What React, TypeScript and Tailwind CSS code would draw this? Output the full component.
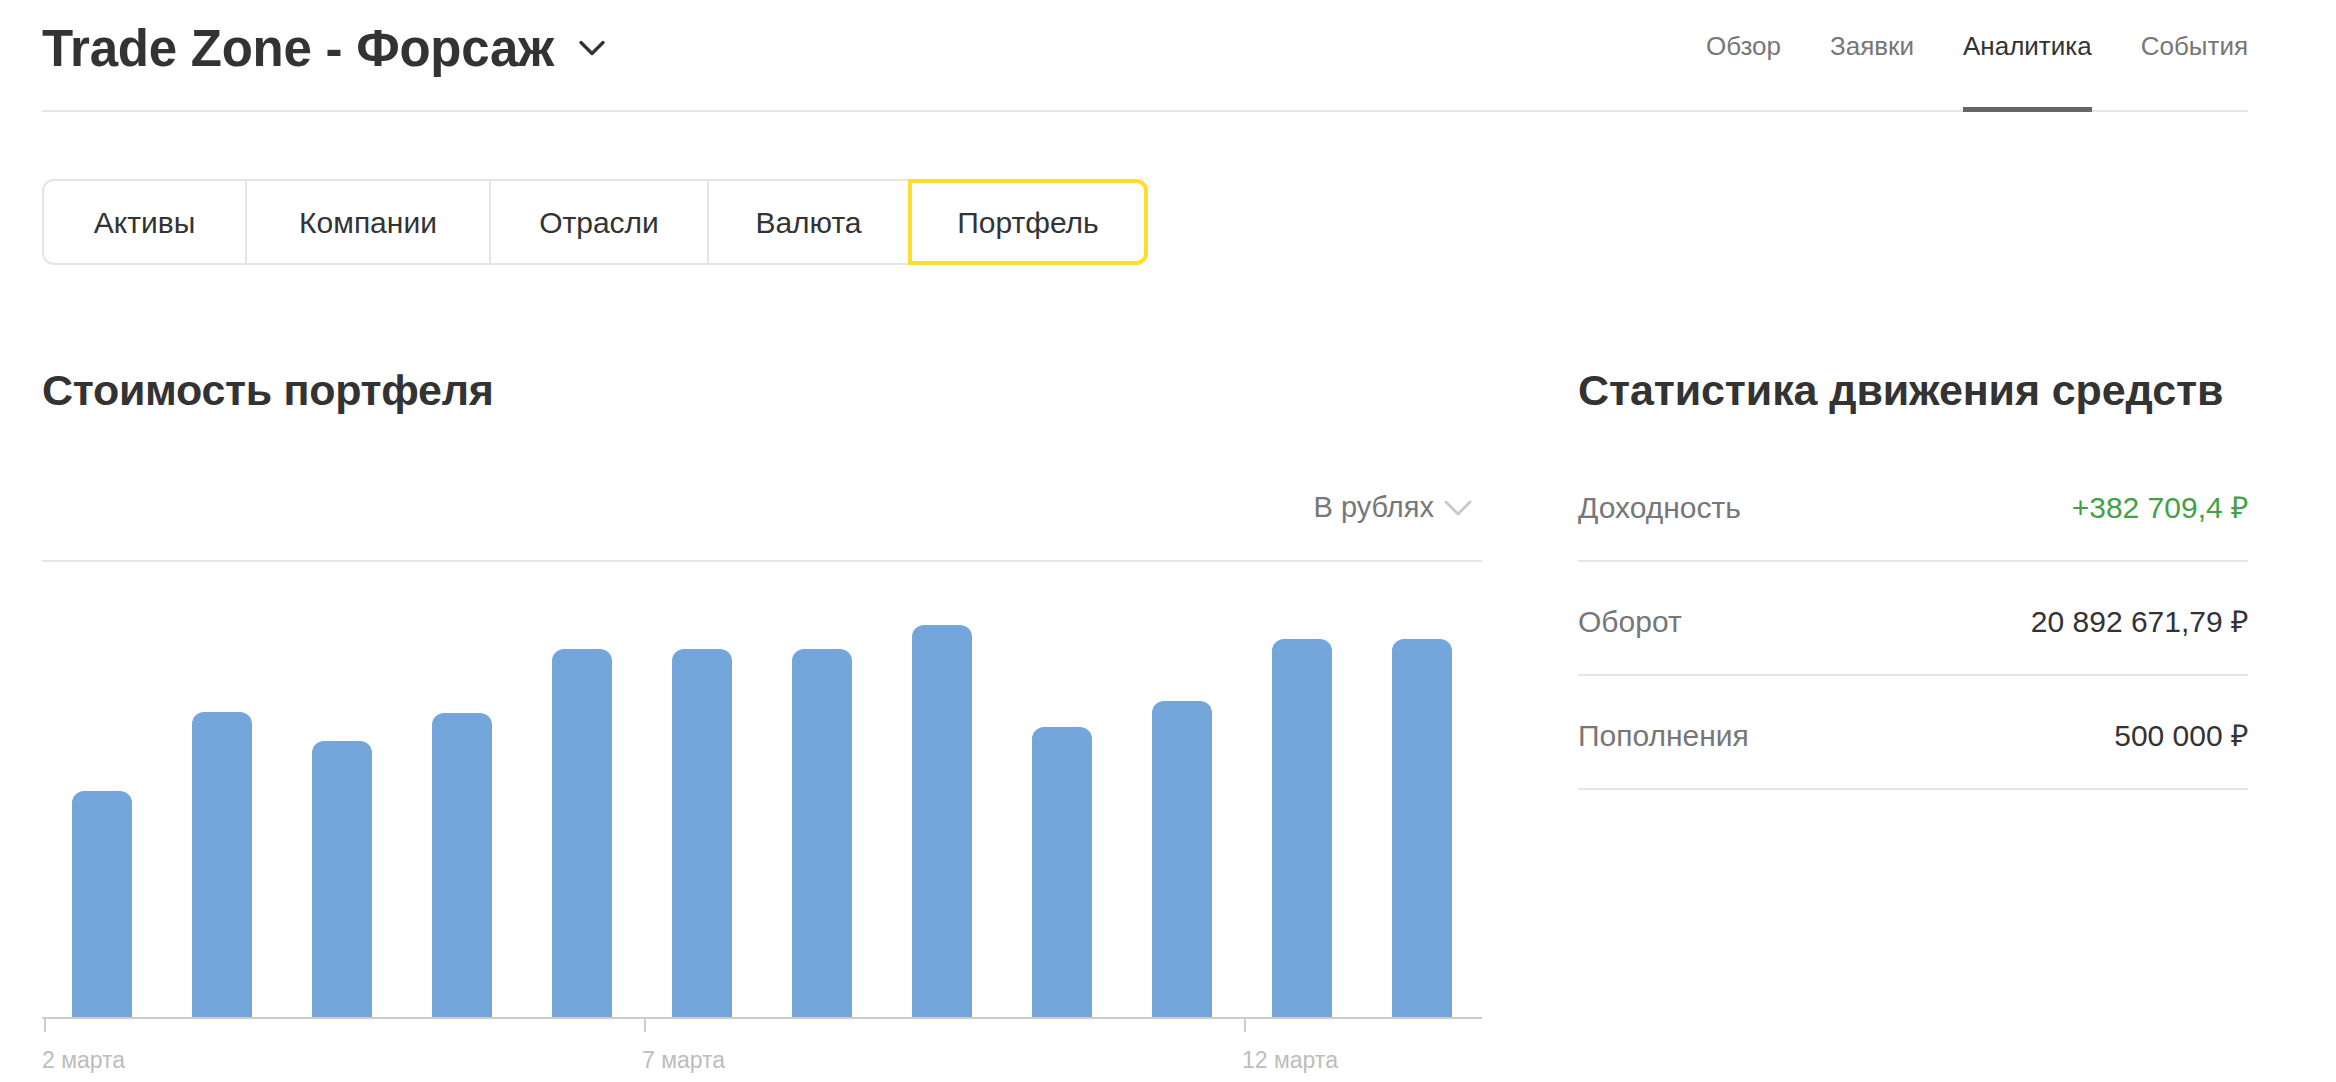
import { ChevronDown } from "lucide-react";

const navItems = [
  { label: "Обзор", active: false },
  { label: "Заявки", active: false },
  { label: "Аналитика", active: true },
  { label: "События", active: false },
];

const tabs = [
  { label: "Активы", width: "w-[201px]", active: false },
  { label: "Компании", width: "w-[244px]", active: false },
  { label: "Отрасли", width: "w-[218px]", active: false },
  { label: "Валюта", width: "w-[201px]", active: false },
  { label: "Портфель", width: "w-[238px]", active: true },
];

// bar heights in px, one per day starting 2 марта
const bars = [226, 305, 276, 304, 368, 368, 368, 392, 290, 316, 378, 378];

const stats = [
  { label: "Доходность", value: "+382 709,4 ₽", positive: true },
  { label: "Оборот", value: "20 892 671,79 ₽", positive: false },
  { label: "Пополнения", value: "500 000 ₽", positive: false },
];

const ticks = [
  { index: 0, label: "2 марта" },
  { index: 5, label: "7 марта" },
  { index: 10, label: "12 марта" },
];

export default function App() {
  return (
    <div
      className="min-h-screen bg-white text-[#333333]"
      style={{ fontFamily: '"Liberation Sans", Arial, sans-serif' }}
    >
      <div className="ml-[42px] w-[2206px]">
        {/* header */}
        <header className="flex h-[112px] justify-between border-b-2 border-[#e5e5e5]">
          <div className="flex items-start gap-[16px] pt-[18px]">
            <h1 className="text-[51px] font-bold leading-[62px] tracking-[-0.25px]">
              Trade Zone - Форсаж
            </h1>
            <ChevronDown className="mt-[8px] h-[44px] w-[44px] text-[#333]" strokeWidth={1.8} />
          </div>
          <nav className="flex gap-[49px]">
            {navItems.map((item) => (
              <a
                key={item.label}
                className={`relative pt-[30px] text-[26px] leading-[32px] ${
                  item.active ? "text-[#333333]" : "text-[#777777]"
                }`}
              >
                {item.label}
                {item.active && (
                  <span className="absolute -bottom-[2px] left-0 right-0 h-[5px] bg-[#666666]" />
                )}
              </a>
            ))}
          </nav>
        </header>

        {/* segment tabs */}
        <div className="mt-[67px] flex">
          <div className="flex rounded-[12px] border-2 border-[#e5e5e5]">
            {tabs.map((tab, i) => (
              <div
                key={tab.label}
                className={`relative flex h-[82px] items-center justify-center text-[30px] ${tab.width} ${
                  i > 0 ? "border-l-2 border-[#e5e5e5]" : ""
                }`}
              >
                {tab.label}
                {tab.active && (
                  <span className="absolute -inset-[2px] rounded-r-[12px] border-[4px] border-[#ffdd2d]" />
                )}
              </div>
            ))}
          </div>
        </div>

        {/* content */}
        <div className="mt-[99px] flex justify-between">
          {/* portfolio chart */}
          <section className="w-[1440px]">
            <h2 className="mb-[32px] text-[43px] font-bold leading-[52px] tracking-[-0.3px]">
              Стоимость портфеля
            </h2>
            <div className="flex h-[114px] items-center justify-end border-b-2 border-[#e5e5e5] pt-[8px]">
              <span className="text-[29px] text-[#777777]">В рублях</span>
              <ChevronDown className="h-[48px] w-[48px] text-[#c8c8c8]" strokeWidth={1.4} />
            </div>
            <div className="flex h-[457px] items-end border-b-2 border-[#cccccc]">
              {bars.map((h, i) => (
                <div key={i} className="flex w-[120px] justify-center">
                  <div className="w-[60px] rounded-t-[12px] bg-[#74a6db]" style={{ height: h }} />
                </div>
              ))}
            </div>
            <div className="flex">
              {bars.map((_, i) => {
                const tick = ticks.find((t) => t.index === i);
                return (
                  <div key={i} className="w-[120px]">
                    {tick && (
                      <div className="flex flex-col">
                        <span className="ml-[2px] h-[13px] w-[2px] bg-[#cccccc]" />
                        <span className="mt-[15px] whitespace-nowrap text-[23px] leading-[26px] text-[#bdbdbd]">
                          {tick.label}
                        </span>
                      </div>
                    )}
                  </div>
                );
              })}
            </div>
          </section>

          {/* cash flow stats */}
          <section className="w-[670px]">
            <h2 className="mb-[32px] whitespace-nowrap text-[43px] font-bold leading-[52px] tracking-[-0.1px]">
              Статистика движения средств
            </h2>
            {stats.map((s) => (
              <div
                key={s.label}
                className="flex h-[114px] items-center justify-between border-b-2 border-[#e5e5e5] pt-[6px] text-[30px]"
              >
                <span className="text-[#777777]">{s.label}</span>
                <span className={s.positive ? "text-[#43a047]" : "text-[#333333]"}>{s.value}</span>
              </div>
            ))}
          </section>
        </div>
      </div>
    </div>
  );
}
